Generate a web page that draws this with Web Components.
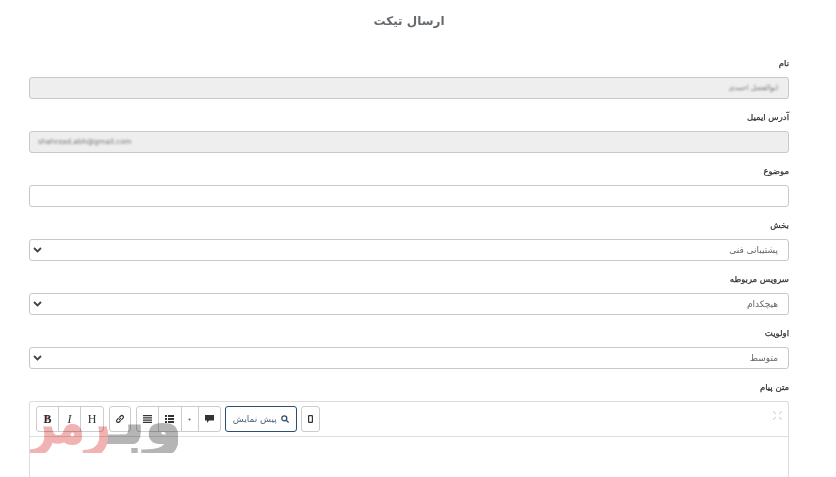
<!DOCTYPE html>
<html lang="fa">
<head>
<meta charset="utf-8">
<title>ارسال تیکت</title>
<style>
  html, body { margin: 0; height: 100%; background: #fff; overflow: hidden; }
  body { font-family: "DejaVu Sans", "Liberation Sans", sans-serif; }
</style>
</head>
<body>
<ticket-page>
  <form-field label="نام"><text-box disabled blurred>ابوالفضل احمدی</text-box></form-field>
  <form-field label="آدرس ایمیل"><text-box disabled blurred ltr>shahrzad.abh@gmail.com</text-box></form-field>
  <form-field label="موضوع"><text-box></text-box></form-field>
  <form-field label="بخش"><select-box>پشتیبانی فنی</select-box></form-field>
  <form-field label="سرویس مربوطه"><select-box>هیچکدام</select-box></form-field>
  <form-field label="اولویت"><select-box>متوسط</select-box></form-field>
  <form-field label="متن پیام"><markdown-editor></markdown-editor></form-field>
</ticket-page>

<script>
"use strict";

// Page frame, title and the watermark on top
class TicketPage extends HTMLElement {
  constructor() {
    super();
    this.attachShadow({mode:"open"}).innerHTML = `
      <style>
        :host { display: block; position: relative; height: 477px; overflow: hidden; padding: 0 47px 0 29px; }
        h2 { margin: 0 0 12px; height: 43px; line-height: 43px; text-align: center; font-size: 12px; font-weight: bold; color: #666a6e; }
        .lista { display: flex; flex-direction: column; gap: 10px; }
        .marca { position: absolute; left: 30px; top: 415px; width: 148px; height: 38px; overflow: hidden; pointer-events: none; opacity: .55; mix-blend-mode: multiply; }
        .marca span { position: absolute; top: -23px; font-weight: bold; font-size: 60px; line-height: 60px; white-space: nowrap; }
        .rojo { left: 0; color: #e57373; transform: scaleX(.74); transform-origin: left center; -webkit-text-stroke: 1px #e57373; }
        .gris { right: -4px; color: #777; -webkit-text-stroke: 2px #777; }
      </style>
      <h2 dir="rtl">ارسال تیکت</h2>
      <div class="lista"><slot></slot></div>
      <div class="marca" dir="rtl"><span class="gris">وبـ</span><span class="rojo">رمز</span></div>
    `;
  }
}
customElements.define("ticket-page", TicketPage);

class FormField extends HTMLElement {
  constructor() {
    super();
    this.attachShadow({mode:"open"}).innerHTML = `
      <style>
        :host { display: block; }
        label { display: block; height: 18px; line-height: 16px; margin-bottom: 4px; text-align: right; font-size: 8.5px; color: #333; -webkit-text-stroke: .25px #333; }
      </style>
      <label dir="rtl"></label>
      <slot></slot>
    `;
  }
  connectedCallback() {
    this.shadowRoot.querySelector("label").textContent = this.getAttribute("label");
  }
}
customElements.define("form-field", FormField);

class TextBox extends HTMLElement {
  constructor() {
    super();
    this.attachShadow({mode:"open"}).innerHTML = `
      <style>
        :host { display: block; box-sizing: border-box; height: 22px; line-height: 20px; padding: 0 10px 0 8px; border: 1px solid #c8c8c8; border-radius: 3px; background: #fff; font-size: 7.2px; color: #666; text-align: right; }
        :host([disabled]) { background: #eee; }
        :host([ltr]) { text-align: left; }
        :host([blurred]) span { display: inline-block; filter: blur(1.3px); opacity: .9; }
      </style>
      <span><slot></slot></span>
    `;
  }
}
customElements.define("text-box", TextBox);

class SelectBox extends HTMLElement {
  constructor() {
    super();
    this.attachShadow({mode:"open"}).innerHTML = `
      <style>
        :host { display: flex; align-items: center; justify-content: space-between; box-sizing: border-box; height: 22px; padding: 0 10px 0 3px; border: 1px solid #c8c8c8; border-radius: 3px; background: #fff; font-size: 9px; color: #666; }
        svg { display: block; width: 9px; height: 6px; }
      </style>
      <svg viewBox="0 0 9 6"><path d="M1 1l3.5 3.5L8 1" fill="none" stroke="#444" stroke-width="1.8"/></svg>
      <span dir="rtl"><slot></slot></span>
    `;
  }
}
customElements.define("select-box", SelectBox);

class ToolGroup extends HTMLElement {
  constructor() {
    super();
    this.attachShadow({mode:"open"}).innerHTML = `
      <style>
        :host { display: flex; height: 26px; box-sizing: border-box; border: 1px solid #ccc; border-radius: 3px; background: transparent; }
        ::slotted(*) { display: flex; align-items: center; justify-content: center; box-sizing: border-box; height: 24px; }
        ::slotted(*:not(:last-child)) { border-right: 1px solid #ccc; }
      </style>
      <slot></slot>
    `;
  }
}
customElements.define("tool-group", ToolGroup);

class MarkdownEditor extends HTMLElement {
  constructor() {
    super();
    this.attachShadow({mode:"open"}).innerHTML = `
      <style>
        :host { display: block; box-sizing: border-box; height: 120px; border: 1px solid #ddd; border-bottom: 0; border-radius: 3px 3px 0 0; }
        .barra { display: flex; align-items: center; gap: 4.5px; height: 35px; box-sizing: border-box; padding: 0 6px; border-bottom: 1px solid #ddd; }
        .letra { font-family: "Liberation Serif", "DejaVu Serif", serif; font-size: 12px; color: #333; }
        .vista { display: flex; align-items: center; gap: 4px; width: 71.5px; height: 26px; box-sizing: border-box; justify-content: center; border: 1px solid #2f4d6e; border-radius: 3px; color: #4a6080; font-size: 9px; }
        .completa { margin: -8px 0 0 auto; }
        svg { display: block; }
      </style>
      <div class="barra">
        <tool-group>
          <span class="letra" style="width:22px;font-weight:bold">B</span>
          <span class="letra" style="width:22px;font-style:italic">I</span>
          <span class="letra" style="width:22px">H</span>
        </tool-group>
        <tool-group>
          <span style="width:20.5px"><svg width="10" height="10" viewBox="0 0 10 10" fill="none" stroke="#333" stroke-width="1.2"><path d="M4.2 5.8l1.6-1.6M3.6 4.2L2 5.8a1.5 1.5 0 0 0 2.2 2.2l1.6-1.6M6.4 5.8L8 4.2A1.5 1.5 0 0 0 5.8 2L4.2 3.6"/></svg></span>
        </tool-group>
        <tool-group>
          <span style="width:22px"><svg width="9" height="8" viewBox="0 0 9 8" fill="#333"><path d="M0 0h9v1.2H0zM0 2.2h9v1.2H0zM0 4.5h9v1.2H0zM0 6.8h9V8H0z"/></svg></span>
          <span style="width:23px"><svg width="9" height="8" viewBox="0 0 9 8" fill="#333"><path d="M0 0h2v2H0zM3 0h6v2H3zM0 3h2v2H0zM3 3h6v2H3zM0 6h2v2H0zM3 6h6v2H3z"/></svg></span>
          <span style="width:17px"><svg width="3" height="3" viewBox="0 0 3 3"><circle cx="1.5" cy="1.5" r="1" fill="#555"/></svg></span>
          <span style="width:21px"><svg width="9" height="8" viewBox="0 0 9 8"><path d="M0 0h9v5.5H4L2 8V5.5H0z" fill="#333"/></svg></span>
        </tool-group>
        <div class="vista">
          <span dir="rtl">پیش نمایش</span>
          <svg width="8" height="8" viewBox="0 0 8 8" fill="none" stroke="#2f4d6e" stroke-width="1.3"><circle cx="3.3" cy="3.3" r="2.5"/><path d="M5.2 5.2L7.6 7.6"/></svg>
        </div>
        <tool-group>
          <span style="width:17px"><svg width="5" height="8" viewBox="0 0 5 8"><rect x=".6" y=".6" width="3.8" height="6.8" rx=".5" fill="none" stroke="#333" stroke-width="1.2"/></svg></span>
        </tool-group>
        <svg class="completa" width="9" height="9" viewBox="0 0 9 9" stroke="#bbb" stroke-width="1.1" stroke-dasharray="1.2 .6" fill="none"><path d="M0.5 0.5l2.5 2.5M8.5 0.5L6 3M0.5 8.5L3 6M8.5 8.5L6 6"/></svg>
      </div>
    `;
  }
}
customElements.define("markdown-editor", MarkdownEditor);
</script>
</body>
</html>
